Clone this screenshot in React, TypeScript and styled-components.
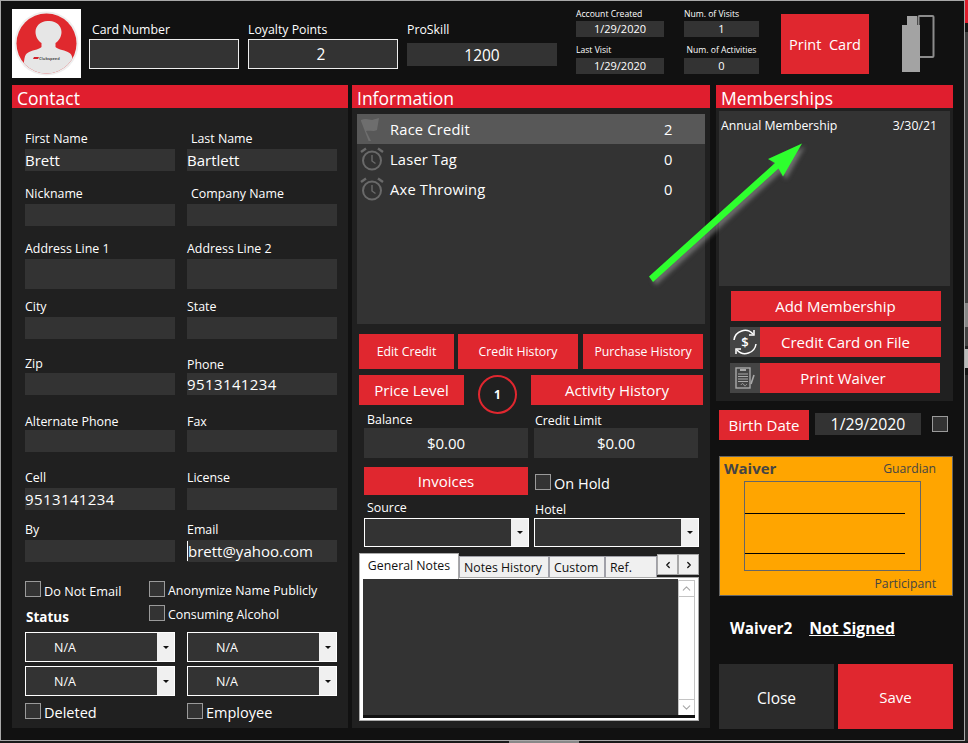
import React from "react";
import styled, { createGlobalStyle } from "styled-components";
import { ChevronLeft, ChevronRight, ChevronUp, ChevronDown } from "lucide-react";

const RED = "#e0272f";
const HEAD_RED = "#e01e2e";
const FIELD = "#333333";
const PANEL = "#202020";
const FONT = `"Open Sans", "Noto Sans", sans-serif`;

const Global = createGlobalStyle`
  html, body { margin: 0; padding: 0; background: #2b2b2b; overflow: hidden; }
  * { box-sizing: border-box; }
  #root { width: 968px; height: 743px; }
`;

const Stage = styled.div`
  width: 968px;
  height: 743px;
  display: flex;
  flex-direction: column;
  font-family: ${FONT};
  color: #fff;
`;
const StageRow = styled.div`
  display: flex;
  height: 741px;
`;
const Win = styled.div`
  position: relative;
  width: 965px;
  height: 741px;
  flex: none;
  border: 1px solid #a8a8a8;
  background: #111111;
  padding: 8px 11px 0;
`;
const SideStrip = styled.div`
  width: 3px;
  display: flex;
  flex-direction: column;
`;
const SidePiece = styled.div<{ $h: number; $c: string }>`
  height: ${(p) => p.$h}px;
  background: ${(p) => p.$c};
`;
const BottomStrip = styled.div`
  height: 2px;
  background: #1a1a1a;
  padding-left: 509px;
`;
const BottomThumb = styled.div`
  width: 70px;
  height: 2px;
  background: #888;
`;

/* header */
const Header = styled.div`
  display: flex;
  height: 69px;
`;
const Avatar = styled.div`
  width: 69px;
  height: 69px;
  background: #fff;
  flex: none;
`;
const HeaderField = styled.div<{ $gap: number; $bottom: number }>`
  width: 150px;
  margin-left: ${(p) => p.$gap}px;
  padding-bottom: ${(p) => p.$bottom}px;
  display: flex;
  flex-direction: column;
  justify-content: flex-end;
`;
const HeaderLabel = styled.div<{ $indent?: number; $mb: number }>`
  font-size: 12.3px;
  line-height: 16px;
  padding-left: ${(p) => p.$indent ?? 0}px;
  margin-bottom: ${(p) => p.$mb}px;
  white-space: nowrap;
`;
const HeaderInput = styled.div<{ $h: number; $bordered?: boolean; $pr?: number }>`
  height: ${(p) => p.$h}px;
  background: ${FIELD};
  border: ${(p) => (p.$bordered ? "1px solid #eee" : "none")};
  padding-right: ${(p) => p.$pr ?? 0}px;
  display: flex;
  align-items: center;
  justify-content: center;
  font-size: 15.5px;
`;
const Stats = styled.div`
  margin-left: 19px;
  display: grid;
  grid-template-columns: 88px 75px;
  grid-template-rows: 28px 37px;
  column-gap: 20px;
`;
const Stat = styled.div`
  display: flex;
  flex-direction: column;
  justify-content: flex-end;
`;
const StatLabel = styled.div<{ $center?: boolean; $mb: number }>`
  font-size: 8.6px;
  line-height: 14px;
  margin-bottom: ${(p) => p.$mb}px;
  text-align: ${(p) => (p.$center ? "center" : "left")};
  white-space: nowrap;
`;
const StatValue = styled.div`
  height: 16px;
  background: ${FIELD};
  font-size: 11px;
  line-height: 16px;
  text-align: center;
`;
const RedButton = styled.button<{ $w: number; $h: number; $size?: number; $ml?: number; $mt?: number; $pr?: number }>`
  width: ${(p) => p.$w}px;
  height: ${(p) => p.$h}px;
  flex: none;
  margin: ${(p) => p.$mt ?? 0}px 0 0 ${(p) => p.$ml ?? 0}px;
  padding: 0 ${(p) => p.$pr ?? 0}px 0 0;
  border: none;
  background: ${RED};
  color: #fff;
  font-family: ${FONT};
  font-size: ${(p) => p.$size ?? 15}px;
  display: flex;
  align-items: center;
  justify-content: center;
  white-space: pre;
`;
const CardIcon = styled.svg`
  width: 33px;
  height: 57px;
  margin: 6px 0 0 33px;
  flex: none;
`;

/* columns */
const Columns = styled.div`
  display: flex;
  margin-top: 7px;
`;
const Panel = styled.section<{ $w: number; $h: number; $ml?: number }>`
  width: ${(p) => p.$w}px;
  height: ${(p) => p.$h}px;
  margin-left: ${(p) => p.$ml ?? 0}px;
  background: ${PANEL};
  flex: none;
`;
const PanelTitle = styled.h2`
  margin: 0;
  height: 23px;
  background: ${HEAD_RED};
  font-size: 17.5px;
  font-weight: 400;
  line-height: 22px;
  padding: 2px 0 0 5px;
`;

/* contact */
const FormGrid = styled.div`
  display: grid;
  grid-template-columns: 150px 150px;
  grid-template-rows: 63px 55px 63px 50px 56px 57px 58px 52px;
  column-gap: 12px;
  padding-left: 13px;
`;
const Field = styled.div`
  display: flex;
  flex-direction: column;
  justify-content: flex-end;
`;
const FieldLabel = styled.label<{ $indent?: number; $mb?: number }>`
  font-size: 12.4px;
  line-height: 16px;
  padding-left: ${(p) => p.$indent ?? 0}px;
  margin-bottom: ${(p) => p.$mb ?? 3}px;
  white-space: nowrap;
`;
const FieldInput = styled.div<{ $h?: number; $digits?: boolean }>`
  height: ${(p) => p.$h ?? 22}px;
  background: ${FIELD};
  font-size: 15px;
  letter-spacing: ${(p) => (p.$digits ? "0.4px" : "0")};
  line-height: 22px;
  white-space: nowrap;
`;
const Caret = styled.span`
  border-left: 1px solid #fff;
`;
const ChecksBlock = styled.div`
  display: flex;
  height: 51px;
  margin: 19px 0 0 13px;
`;
const ChecksCol = styled.div<{ $w: number }>`
  width: ${(p) => p.$w}px;
  display: flex;
  flex-direction: column;
`;
const CheckRow = styled.div<{ $mt?: number; $ml?: number; $gap?: number }>`
  display: flex;
  align-items: flex-start;
  height: 16px;
  gap: ${(p) => p.$gap ?? 3}px;
  margin-top: ${(p) => p.$mt ?? 0}px;
  margin-left: ${(p) => p.$ml ?? 0}px;
  white-space: nowrap;
`;
const Box = styled.span`
  width: 16px;
  height: 16px;
  flex: none;
  background: ${FIELD};
  border: 1px solid #9a9a9a;
`;
const CheckText = styled.span<{ $size?: number }>`
  font-size: ${(p) => p.$size ?? 12.4}px;
  line-height: 20px;
`;
const StatusLabel = styled.div`
  margin: 11px 0 0 1px;
  font-size: 13.5px;
  font-weight: 700;
  line-height: 18px;
`;
const SelectGrid = styled.div`
  display: grid;
  grid-template-columns: 150px 150px;
  grid-auto-rows: 30px;
  gap: 4px 12px;
  padding-left: 13px;
`;
const SelectBox = styled.div<{ $h?: number }>`
  height: ${(p) => p.$h ?? 30}px;
  border: 1px solid #fff;
  background: ${FIELD};
  display: flex;
  align-items: center;
  font-size: 12.5px;
  line-height: 30px;
  padding-left: 28px;
`;
const SelectText = styled.span`
  padding-top: 2px;
`;
const SelectArrow = styled.span`
  margin-left: auto;
  width: 17px;
  height: 100%;
  flex: none;
  background: #f0f0f0;
  display: flex;
  align-items: center;
  justify-content: center;
  &::after {
    content: "";
    border-left: 3px solid transparent;
    border-right: 3px solid transparent;
    border-top: 3px solid #111;
  }
`;
const BottomChecks = styled.div`
  display: grid;
  grid-template-columns: 162px 150px;
  margin: 7px 0 0 13px;
`;

/* information */
const CreditList = styled.div`
  margin: 6px 5px 0;
  height: 210px;
  background: ${FIELD};
`;
const CreditRow = styled.div<{ $active?: boolean }>`
  height: 30px;
  display: flex;
  align-items: center;
  background: ${(p) => (p.$active ? "#585858" : "transparent")};
  font-size: 14.7px;
  letter-spacing: 0.2px;
  padding-left: 3px;
`;
const CreditIcon = styled.svg`
  width: 24px;
  height: 24px;
  flex: none;
`;
const CreditName = styled.span`
  margin-left: 6px;
  width: 274px;
`;
const BtnRow = styled.div<{ $mt: number; $h: number }>`
  display: flex;
  height: ${(p) => p.$h}px;
  margin: ${(p) => p.$mt}px 0 0 7px;
`;
const LevelBadge = styled.div`
  width: 39px;
  height: 39px;
  flex: none;
  margin-left: 14px;
  border: 2px solid ${RED};
  border-radius: 50%;
  display: flex;
  align-items: center;
  justify-content: center;
  font-size: 12px;
  font-weight: 700;
  background: ${PANEL};
`;
const MoneyGrid = styled.div`
  display: grid;
  grid-template-columns: 164px 164px;
  column-gap: 6px;
  margin-left: 12px;
  height: 53px;
`;
const MoneyField = styled.div`
  display: flex;
  flex-direction: column;
  justify-content: flex-end;
`;
const MoneyValue = styled.div`
  height: 30px;
  background: ${FIELD};
  font-size: 15px;
  line-height: 30px;
  text-align: center;
`;
const InvoiceRow = styled.div`
  display: flex;
  margin: 9px 0 0 12px;
`;
const SelectRow = styled.div`
  display: grid;
  grid-template-columns: 165px 165px;
  column-gap: 5px;
  height: 52px;
  margin-left: 12px;
`;
const Tabs = styled.div`
  width: 340px;
  margin: 6px 0 0 7px;
  color: #111;
`;
const TabStrip = styled.div`
  display: flex;
  height: 24px;
  align-items: flex-end;
`;
const ActiveTab = styled.div`
  width: 100px;
  height: 26px;
  margin-bottom: -2px;
  position: relative;
  z-index: 1;
  background: #fff;
  border: 1px solid #aaa;
  border-bottom: none;
  font-size: 12.3px;
  line-height: 24px;
  text-align: center;
  white-space: nowrap;
`;
const Tab = styled.div<{ $w: number }>`
  width: ${(p) => p.$w}px;
  height: 21px;
  background: #f0f0f0;
  border: 1px solid #a0a0a8;
  border-bottom: none;
  font-size: 12.3px;
  line-height: 21px;
  padding-left: 4px;
  white-space: nowrap;
`;
const TabScroll = styled.div<{ $w: number }>`
  width: ${(p) => p.$w}px;
  height: 21px;
  margin-bottom: 2px;
  background: #f0f0f0;
  border: 1px solid #a8a8a8;
  display: flex;
  align-items: center;
  justify-content: center;
`;
const TabBody = styled.div`
  height: 144px;
  background: #fff;
  border: 1px solid #aaa;
  padding: 1px 3px 2px;
`;
const NotesRow = styled.div`
  display: flex;
  height: 136px;
`;
const NotesArea = styled.div`
  flex: 1;
  background: ${FIELD};
`;
const ScrollBar = styled.div`
  width: 17px;
  display: flex;
  flex-direction: column;
  justify-content: space-between;
  background: #fff;
  border: 1px solid #c4c4c4;
  border-bottom: none;
  margin-top: 1px;
`;
const ScrollBtn = styled.div<{ $up?: boolean }>`
  height: 16px;
  display: flex;
  align-items: center;
  justify-content: center;
  color: #a8a8a8;
  border-${(p) => (p.$up ? "bottom" : "top")}: 1px solid #c4c4c4;
`;
const NotesFoot = styled.div`
  height: 3px;
  background: #111;
`;

/* memberships */
const MemberList = styled.div`
  margin: 3px 3px 0;
  height: 175px;
  background: ${FIELD};
  padding: 6px 13px 0 2px;
  display: flex;
  justify-content: space-between;
  font-size: 12.3px;
  line-height: 18px;
`;
const IconButtonRow = styled.div<{ $mt: number; $w: number }>`
  display: flex;
  margin: ${(p) => p.$mt}px 0 0 14px;
  width: ${(p) => p.$w}px;
`;
const IconTile = styled.div`
  width: 30px;
  height: 30px;
  flex: none;
  background: #444;
  display: flex;
  align-items: center;
  justify-content: center;
`;
const RightCol = styled.div`
  width: 237px;
  margin-left: 6px;
  flex: none;
`;
const BirthRow = styled.div`
  display: flex;
  margin: 9px 0 0 3px;
`;
const BirthValue = styled.div`
  width: 106px;
  height: 22px;
  margin: 3px 0 0 6px;
  background: ${FIELD};
  font-size: 15.8px;
  line-height: 22px;
  text-align: center;
`;
const BirthCheck = styled(Box)`
  margin: 6px 0 0 11px;
`;
const Waiver = styled.div`
  width: 234px;
  height: 140px;
  margin: 16px 0 0 3px;
  background: #ffa500;
  border: 1px solid #666;
  color: #444;
  display: flex;
  flex-direction: column;
`;
const WaiverTop = styled.div`
  height: 24px;
  display: flex;
  justify-content: space-between;
  align-items: center;
  padding: 0 16px 2px 4px;
`;
const WaiverTitle = styled.span`
  font-size: 15px;
  font-weight: 700;
`;
const WaiverNote = styled.span`
  font-size: 12.2px;
`;
const SignBox = styled.div`
  width: 177px;
  height: 90px;
  margin-left: 24px;
  border: 1px solid #666;
  flex: none;
`;
const SignLine = styled.div<{ $mt: number }>`
  width: 160px;
  height: 1px;
  margin-top: ${(p) => p.$mt}px;
  background: #000;
`;
const WaiverFoot = styled.div`
  height: 24px;
  padding-right: 16px;
  display: flex;
  align-items: center;
  justify-content: flex-end;
`;
const Waiver2 = styled.div`
  margin: 22px 0 0 14px;
  height: 20px;
  display: flex;
  font-size: 15.3px;
  font-weight: 700;
  line-height: 20px;
`;
const NotSigned = styled.span`
  margin-left: 17px;
  font-size: 15.8px;
  text-decoration: underline;
`;
const FootRow = styled.div`
  display: flex;
  gap: 4px;
  margin: 26px 0 0 3px;
`;
const CloseButton = styled.button`
  width: 115px;
  height: 65px;
  padding: 2px 0 0;
  border: none;
  background: #2b2b2b;
  color: #fff;
  font-family: ${FONT};
  font-size: 15.5px;
`;
const Arrow = styled.svg`
  position: absolute;
  left: -1px;
  top: -1px;
  width: 965px;
  height: 741px;
  pointer-events: none;
  filter: drop-shadow(3px 3px 2px rgba(170, 170, 170, 0.5));
`;

const AvatarArt = () => (
  <svg width="69" height="69" viewBox="0 0 69 69">
    <defs>
      <clipPath id="disc"><circle cx="34.5" cy="34.5" r="30" /></clipPath>
    </defs>
    <circle cx="34.5" cy="34.5" r="32" fill="#eeeeee" />
    <circle cx="34.5" cy="34.5" r="30" fill="#e0292e" />
    <g clipPath="url(#disc)">
      <path
        d="M35.500 12c-7 0-12 5-12 11 0 5 3 9 6 11v4c-3 3-10 3-14 6-3 2-4 6-4 25h50c0-19-1-23-4-25-4-3-11-3-14-6v-4c3-2 6-6 6-11 0-6-5-11-12-11z"
        fill="#e6e6e6"
      />
    </g>
    <path d="M22 48h5l-1 2h-5z" fill="#d0202a" />
    <text x="27" y="51" fontSize="4" fontWeight="700" fill="#555" fontFamily="Open Sans, sans-serif">Clubspeed</text>
  </svg>
);

const FlagGlyph = () => (
  <CreditIcon viewBox="0 0 24 24">
    <path d="M1 3C6 1 9 3 12 3L19 1L17 13C13 15 10 13 6 14L11 24L9 25L1 4z" fill="#6e6e6e" />
  </CreditIcon>
);

const AlarmGlyph = () => (
  <CreditIcon viewBox="0 0 24 24" fill="none" stroke="#6a6a6a" strokeWidth="2">
    <circle cx="12" cy="13.500" r="9" />
    <path d="M12 8v6l3.500 2.500" strokeWidth="1.400" />
    <path d="M1 5l5-3.500M23 5l-5-3.500" strokeWidth="2.400" />
  </CreditIcon>
);

const CreditCardGlyph = () => (
  <svg width="28" height="28" viewBox="0 0 28 28" fill="none" stroke="#fff" strokeWidth="1.500">
    <path d="M3 12a11 11 0 0 1 19-6" />
    <path d="M25 16a11 11 0 0 1-19 6" />
    <path d="M23 2v5h-5M5 26v-5h5" />
    <text x="14" y="18.500" textAnchor="middle" fontSize="13" fontWeight="600" fill="#fff" stroke="none" fontFamily="Open Sans, sans-serif">$</text>
  </svg>
);

const WaiverGlyph = () => (
  <svg width="20" height="22" viewBox="0 0 20 22" fill="none" stroke="#a9a9a9">
    <rect x="1" y="1" width="14" height="20" strokeWidth="1.400" />
    <path d="M5 3h6" strokeWidth="2" />
    <path d="M3 7h10M3 9.500h10M3 12h10M3 14.500h10" strokeWidth="1.200" />
    <path d="M6 18c1-2 2-2 3 0s2 0 3-1" strokeWidth="1" />
    <path d="M19 8l-3 9" strokeWidth="1.600" />
  </svg>
);

type F = { label: string; value?: React.ReactNode; h?: number; indent?: number; mb?: number; digits?: boolean };
const fields: F[] = [
  { label: "First Name", value: "Brett", mb: 2 },
  { label: "Last Name", value: "Bartlett", indent: 4, mb: 2 },
  { label: "Nickname", mb: 2 },
  { label: "Company Name", indent: 4, mb: 2 },
  { label: "Address Line 1", h: 30, mb: 2 },
  { label: "Address Line 2", h: 30, mb: 2 },
  { label: "City", mb: 2 },
  { label: "State", mb: 2 },
  { label: "Zip", mb: 1 },
  { label: "Phone", value: "9513141234", mb: 0, digits: true },
  { label: "Alternate Phone", mb: 0 },
  { label: "Fax", mb: 0 },
  { label: "Cell", value: "9513141234", mb: 2, digits: true },
  { label: "License", mb: 2 },
  { label: "By", mb: 2 },
  { label: "Email", value: <><Caret />brett@yahoo.com</>, mb: 2 },
];

export default function App() {
  return (
    <Stage>
      <Global />
      <StageRow>
        <Win>
          <Header>
            <Avatar><AvatarArt /></Avatar>
            <HeaderField $gap={8} $bottom={9}>
              <HeaderLabel $indent={3} $mb={1}>Card Number</HeaderLabel>
              <HeaderInput $h={30} $bordered />
            </HeaderField>
            <HeaderField $gap={9} $bottom={9}>
              <HeaderLabel $mb={1}>Loyalty Points</HeaderLabel>
              <HeaderInput $h={30} $bordered $pr={4}>2</HeaderInput>
            </HeaderField>
            <HeaderField $gap={9} $bottom={12}>
              <HeaderLabel $mb={5}>ProSkill</HeaderLabel>
              <HeaderInput $h={23}>1200</HeaderInput>
            </HeaderField>
            <Stats>
              <Stat><StatLabel $mb={0}>Account Created</StatLabel><StatValue>1/29/2020</StatValue></Stat>
              <Stat><StatLabel $mb={0}>Num. of Visits</StatLabel><StatValue>1</StatValue></Stat>
              <Stat><StatLabel $mb={1}>Last Visit</StatLabel><StatValue>1/29/2020</StatValue></Stat>
              <Stat><StatLabel $mb={1} $center>Num. of Activities</StatLabel><StatValue>0</StatValue></Stat>
            </Stats>
            <RedButton $w={88} $h={60} $ml={22} $mt={5} $size={14.5}>{"Print  Card"}</RedButton>
            <CardIcon viewBox="0 0 33 57">
              <rect x="16.500" y="1" width="15" height="41" rx="1" fill="none" stroke="#8c8c8c" strokeWidth="2" />
              <path d="M5 1h10v9h3v47H0V10h5z" fill="#a3a3a3" />
            </CardIcon>
          </Header>
          <Columns>
            <Panel $w={336} $h={643}>
              <PanelTitle>Contact</PanelTitle>
              <FormGrid>
                {fields.map((f) => (
                  <Field key={f.label}>
                    <FieldLabel $indent={f.indent} $mb={f.mb}>{f.label}</FieldLabel>
                    <FieldInput $h={f.h} $digits={f.digits}>{f.value}</FieldInput>
                  </Field>
                ))}
              </FormGrid>
              <ChecksBlock>
                <ChecksCol $w={124}>
                  <CheckRow><Box /><CheckText $size={12.7}>Do Not Email</CheckText></CheckRow>
                  <StatusLabel>Status</StatusLabel>
                </ChecksCol>
                <ChecksCol $w={188}>
                  <CheckRow><Box /><CheckText>Anonymize Name Publicly</CheckText></CheckRow>
                  <CheckRow $mt={8}><Box /><CheckText>Consuming Alcohol</CheckText></CheckRow>
                </ChecksCol>
              </ChecksBlock>
              <SelectGrid>
                <SelectBox><SelectText>N/A</SelectText><SelectArrow /></SelectBox>
                <SelectBox><SelectText>N/A</SelectText><SelectArrow /></SelectBox>
                <SelectBox><SelectText>N/A</SelectText><SelectArrow /></SelectBox>
                <SelectBox><SelectText>N/A</SelectText><SelectArrow /></SelectBox>
              </SelectGrid>
              <BottomChecks>
                <CheckRow><Box /><CheckText $size={14.5}>Deleted</CheckText></CheckRow>
                <CheckRow><Box /><CheckText $size={14.5}>Employee</CheckText></CheckRow>
              </BottomChecks>
            </Panel>

            <Panel $w={358} $h={643} $ml={4}>
              <PanelTitle>Information</PanelTitle>
              <CreditList>
                <CreditRow $active><FlagGlyph /><CreditName>Race Credit</CreditName>2</CreditRow>
                <CreditRow><AlarmGlyph /><CreditName>Laser Tag</CreditName>0</CreditRow>
                <CreditRow><AlarmGlyph /><CreditName>Axe Throwing</CreditName>0</CreditRow>
              </CreditList>
              <BtnRow $mt={10} $h={35}>
                <RedButton $w={95} $h={35} $size={12.3}>Edit Credit</RedButton>
                <RedButton $w={120} $h={35} $size={12.3} $ml={4}>Credit History</RedButton>
                <RedButton $w={120} $h={35} $size={12.3} $ml={5}>Purchase History</RedButton>
              </BtnRow>
              <BtnRow $mt={6} $h={30}>
                <RedButton $w={105} $h={30}>Price Level</RedButton>
                <LevelBadge>1</LevelBadge>
                <RedButton $w={172} $h={30} $ml={14}>Activity History</RedButton>
              </BtnRow>
              <MoneyGrid>
                <MoneyField>
                  <FieldLabel $indent={3} $mb={0}>Balance</FieldLabel>
                  <MoneyValue>$0.00</MoneyValue>
                </MoneyField>
                <MoneyField>
                  <FieldLabel $indent={1} $mb={-1}>Credit Limit</FieldLabel>
                  <MoneyValue>$0.00</MoneyValue>
                </MoneyField>
              </MoneyGrid>
              <InvoiceRow>
                <RedButton $w={164} $h={28}>Invoices</RedButton>
                <CheckRow $ml={7} $mt={7}><Box /><CheckText $size={14.5}>On Hold</CheckText></CheckRow>
              </InvoiceRow>
              <SelectRow>
                <MoneyField>
                  <FieldLabel $indent={3} $mb={2}>Source</FieldLabel>
                  <SelectBox $h={29}><SelectArrow /></SelectBox>
                </MoneyField>
                <MoneyField>
                  <FieldLabel $indent={1} $mb={0}>Hotel</FieldLabel>
                  <SelectBox $h={29}><SelectArrow /></SelectBox>
                </MoneyField>
              </SelectRow>
              <Tabs>
                <TabStrip>
                  <ActiveTab>General Notes</ActiveTab>
                  <Tab $w={90}>Notes History</Tab>
                  <Tab $w={56}>Custom</Tab>
                  <Tab $w={52}>Ref.</Tab>
                  <TabScroll $w={21}><ChevronLeft size={10} strokeWidth={3} /></TabScroll>
                  <TabScroll $w={21}><ChevronRight size={10} strokeWidth={3} /></TabScroll>
                </TabStrip>
                <TabBody>
                  <NotesRow>
                    <NotesArea />
                    <ScrollBar>
                      <ScrollBtn $up><ChevronUp size={13} /></ScrollBtn>
                      <ScrollBtn><ChevronDown size={13} /></ScrollBtn>
                    </ScrollBar>
                  </NotesRow>
                  <NotesFoot />
                </TabBody>
              </Tabs>
            </Panel>

            <RightCol>
              <Panel $w={237} $h={316}>
                <PanelTitle>Memberships</PanelTitle>
                <MemberList><span>Annual Membership</span><span>3/30/21</span></MemberList>
                <RedButton $w={210} $h={30} $ml={15} $mt={5} $pr={1}>Add Membership</RedButton>
                <IconButtonRow $mt={6} $w={211}>
                  <IconTile><CreditCardGlyph /></IconTile>
                  <RedButton $w={181} $h={30} $pr={10}>Credit Card on File</RedButton>
                </IconButtonRow>
                <IconButtonRow $mt={6} $w={210}>
                  <IconTile><WaiverGlyph /></IconTile>
                  <RedButton $w={180} $h={30} $pr={14}>Print Waiver</RedButton>
                </IconButtonRow>
              </Panel>
              <BirthRow>
                <RedButton $w={90} $h={30}>Birth Date</RedButton>
                <BirthValue>1/29/2020</BirthValue>
                <BirthCheck />
              </BirthRow>
              <Waiver>
                <WaiverTop><WaiverTitle>Waiver</WaiverTitle><WaiverNote>Guardian</WaiverNote></WaiverTop>
                <SignBox><SignLine $mt={31} /><SignLine $mt={39} /></SignBox>
                <WaiverFoot><WaiverNote>Participant</WaiverNote></WaiverFoot>
              </Waiver>
              <Waiver2>Waiver2<NotSigned>Not Signed</NotSigned></Waiver2>
              <FootRow>
                <CloseButton>Close</CloseButton>
                <RedButton $w={115} $h={65} $pr={0}>Save</RedButton>
              </FootRow>
            </RightCol>
          </Columns>
          <Arrow viewBox="0 0 965 741">
            <path d="M649 276.500L775 163l-7-4 34-15.500-19 33-4.500-8L653 282z" fill="#2eff2e" />
          </Arrow>
        </Win>
        <SideStrip>
          <SidePiece $h={23} $c="#e01e2e" />
          <SidePiece $h={9} $c="#151515" />
          <SidePiece $h={271} $c="#444" />
          <SidePiece $h={24} $c="#888" />
          <SidePiece $h={19} $c="#444" />
          <SidePiece $h={3} $c="#222" />
          <SidePiece $h={19} $c="#bbb" />
          <SidePiece $h={7} $c="#151515" />
          <SidePiece $h={366} $c="#2b2b2b" />
        </SideStrip>
      </StageRow>
      <BottomStrip><BottomThumb /></BottomStrip>
    </Stage>
  );
}
